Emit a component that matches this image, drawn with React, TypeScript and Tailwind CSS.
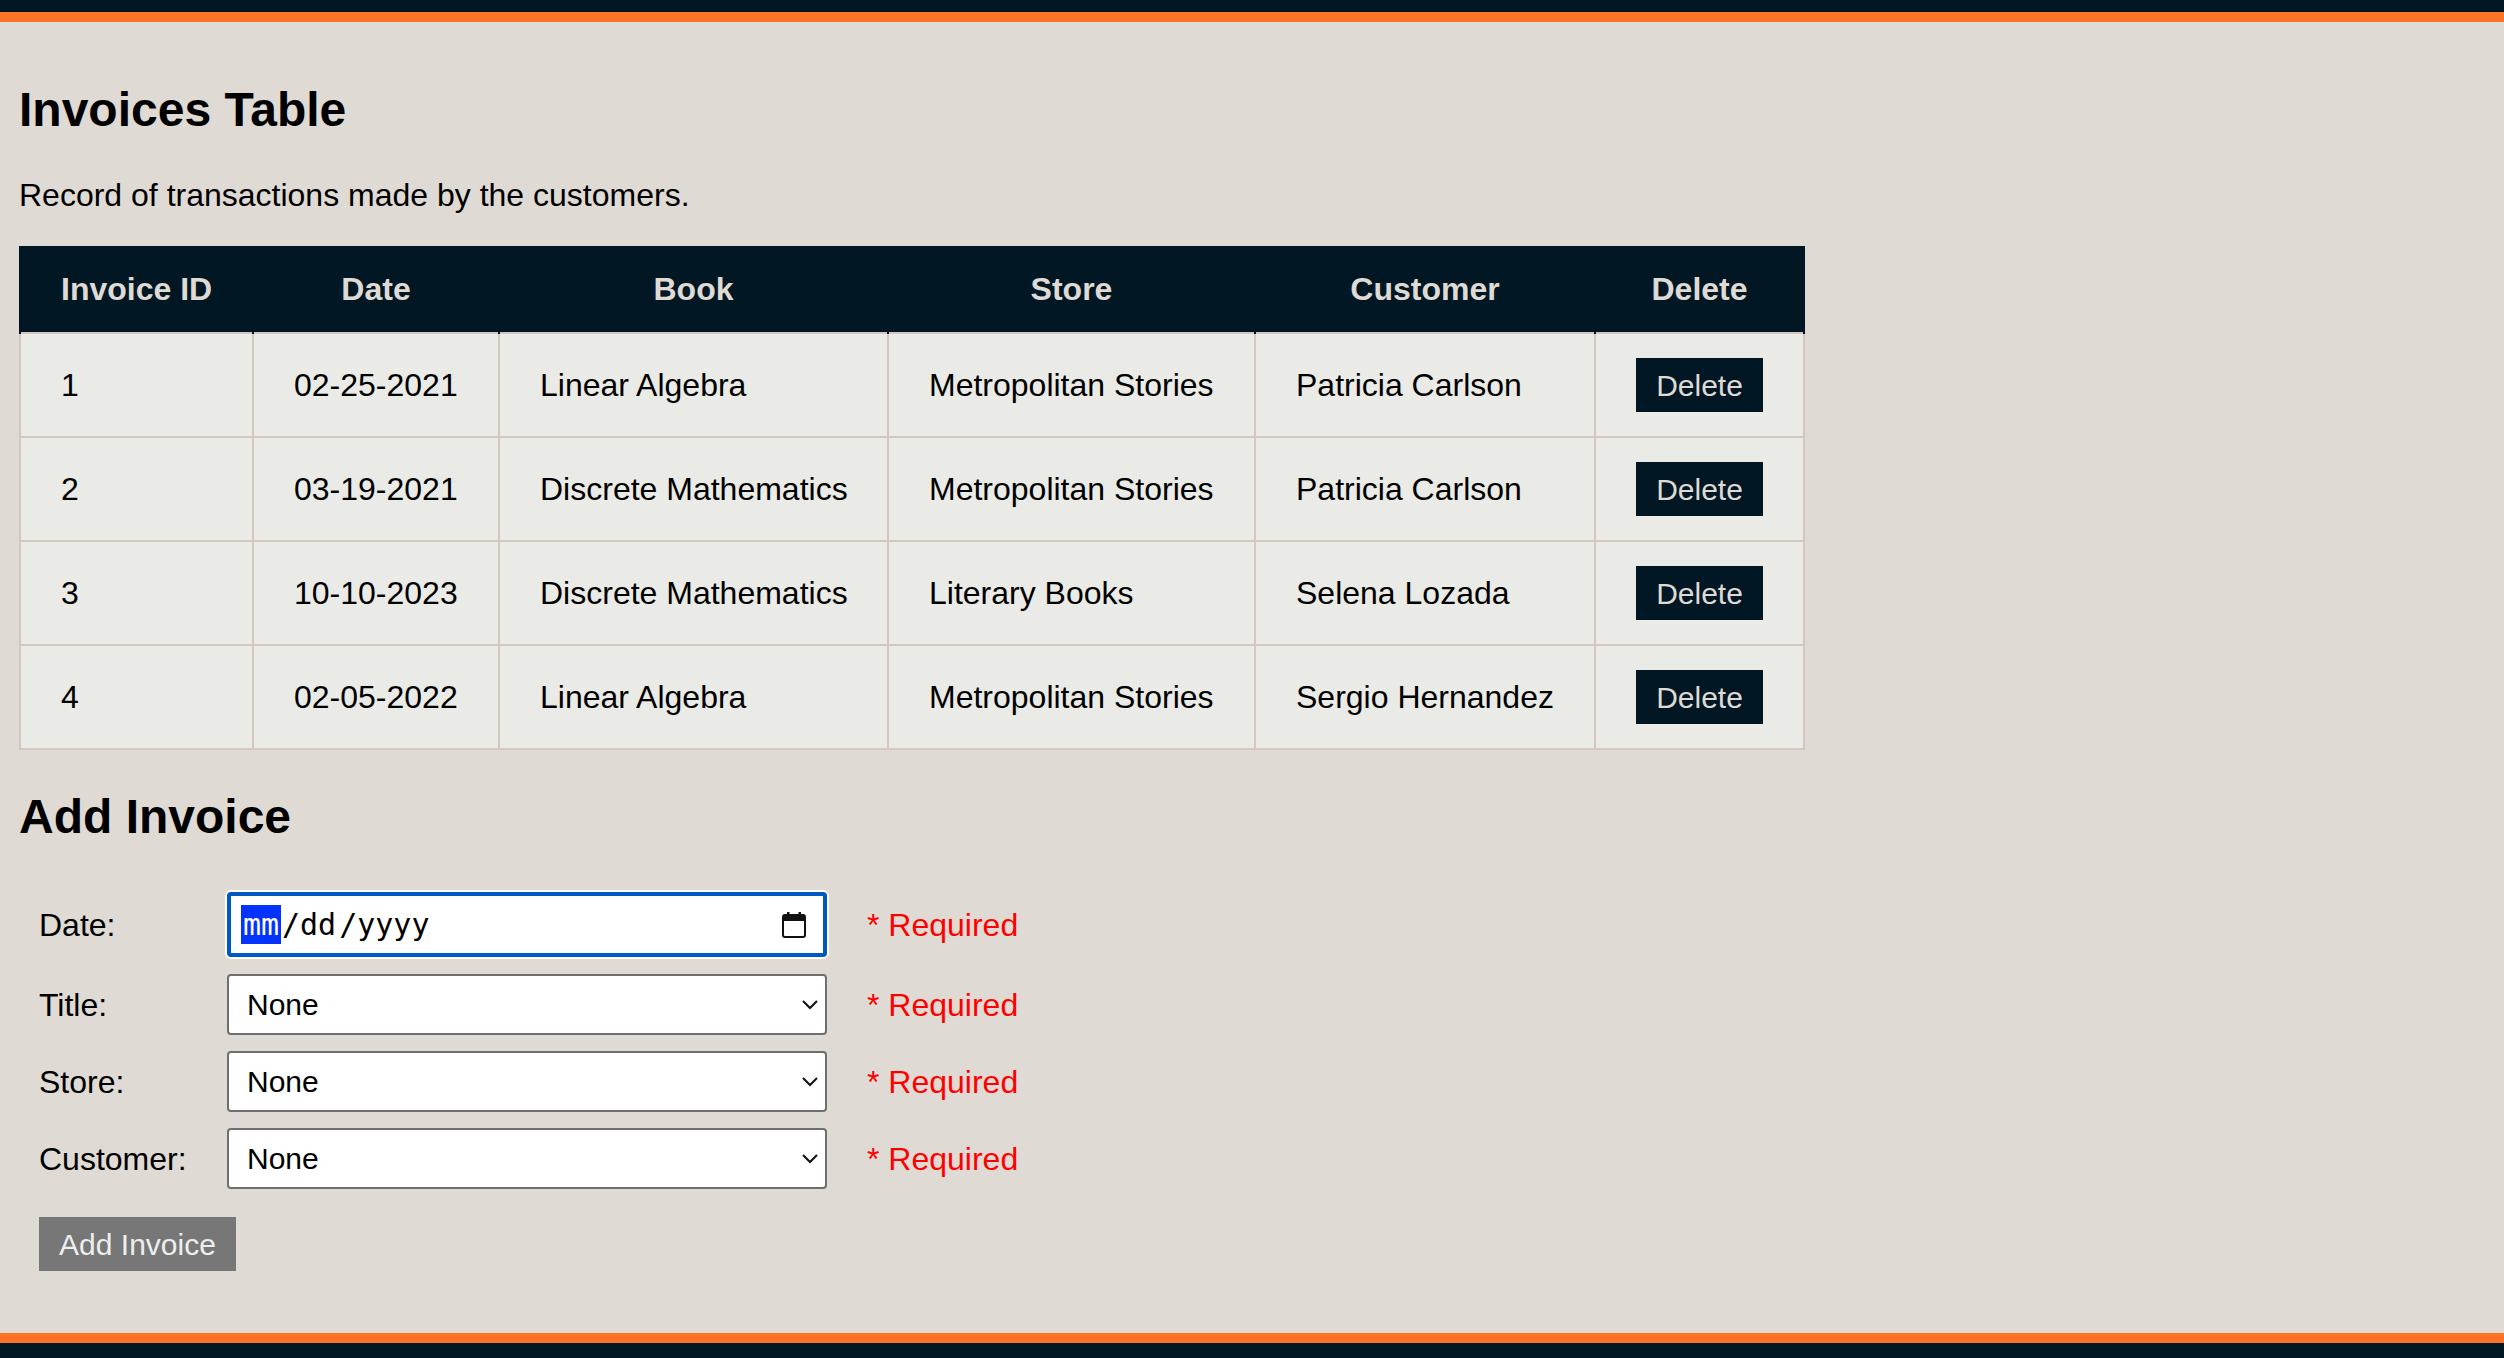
const invoices = [
  { id: 1, date: '02-25-2021', book: 'Linear Algebra', store: 'Metropolitan Stories', customer: 'Patricia Carlson' },
  { id: 2, date: '03-19-2021', book: 'Discrete Mathematics', store: 'Metropolitan Stories', customer: 'Patricia Carlson' },
  { id: 3, date: '10-10-2023', book: 'Discrete Mathematics', store: 'Literary Books', customer: 'Selena Lozada' },
  { id: 4, date: '02-05-2022', book: 'Linear Algebra', store: 'Metropolitan Stories', customer: 'Sergio Hernandez' },
]

function Required() {
  return <span className="ml-[40px] text-[32px] text-[#ff0000]">* Required</span>
}

function SelectRow({ label }: { label: string }) {
  return (
    <div className="flex items-center">
      <label className="w-[188px] text-[32px] text-black">{label}</label>
      <div className="relative w-[600px]">
        <select className="block h-[61px] w-full appearance-none rounded-[4px] border-2 border-[#6f6f6f] bg-white pl-[18px] text-[30px] text-black">
          <option>None</option>
        </select>
        <svg className="pointer-events-none absolute right-[9px] top-[26px] h-[10px] w-[16px]" viewBox="0 0 16 10" fill="none">
          <path d="M1 1l7 7 7-7" stroke="#111" strokeWidth="2" />
        </svg>
      </div>
      <Required />
    </div>
  )
}

export default function App() {
  const th = 'whitespace-nowrap bg-[#011724] border-x-2 border-[#011724] px-[40px] text-center text-[32px] font-bold text-[#dfdad4]'
  const td = 'whitespace-nowrap border-2 border-[#d3c7bf] px-[40px] text-[32px] text-black'

  return (
    <div className="flex min-h-screen flex-col bg-[#dfdad4] font-['Liberation_Sans',Arial,sans-serif]">
      <header className="h-[22px] border-b-[10px] border-[#ff7326] bg-[#011724]" />

      <main className="flex-1 px-[19px]">
        <h2 className="mt-[60px] text-[48px] font-bold leading-[55px] text-black">Invoices Table</h2>
        <p className="mt-[40px] text-[32px] leading-[37px] text-black">Record of transactions made by the customers.</p>

        <table className="mt-[32px] w-[1784px] table-fixed border-collapse">
          <colgroup>
            <col className="w-[233px]" />
            <col className="w-[246px]" />
            <col className="w-[389px]" />
            <col className="w-[367px]" />
            <col className="w-[340px]" />
            <col className="w-[209px]" />
          </colgroup>
          <thead>
            <tr className="h-[87px]">
              <th className={th}>Invoice ID</th>
              <th className={th}>Date</th>
              <th className={th}>Book</th>
              <th className={th}>Store</th>
              <th className={th}>Customer</th>
              <th className={th}>Delete</th>
            </tr>
          </thead>
          <tbody>
            {invoices.map((inv) => (
              <tr key={inv.id} className="h-[104px] bg-[#eaeae6]">
                <td className={td}>{inv.id}</td>
                <td className={td}>{inv.date}</td>
                <td className={td}>{inv.book}</td>
                <td className={td}>{inv.store}</td>
                <td className={td}>{inv.customer}</td>
                <td className={`${td} text-center`}>
                  <button className="h-[54px] w-[127px] bg-[#011724] text-[30px] text-[#dfdad4]">Delete</button>
                </td>
              </tr>
            ))}
          </tbody>
        </table>

        <h2 className="mt-[39px] text-[48px] font-bold leading-[55px] text-black">Add Invoice</h2>

        <form className="mt-[48px] flex flex-col gap-[16px] pl-[20px]">
          <div className="mb-[1px] flex items-center">
            <label className="w-[188px] text-[32px] text-black">Date:</label>
            <div className="flex h-[65px] w-[600px] items-center justify-between rounded-[4px] border-4 border-[#0059c1] bg-white pl-[10px] pr-[17px] shadow-[0_0_0_2px_#ffffff] font-['DejaVu_Sans_Mono',monospace] text-[30px] text-black">
              <span className="flex items-center">
                <span className="flex h-[39px] w-[40px] items-center justify-center bg-[#0433ff] text-white">mm</span>
                <span className="ml-[1px]">/dd</span>
                <span className="ml-[3px]">/yyyy</span>
              </span>
              <svg className="h-[26px] w-[24px]" viewBox="0 0 24 26" fill="none">
                <path d="M5 0h2.5v3H5zM16.5 0H19v3h-2.5z" fill="#111" />
                <rect x="1" y="3" width="22" height="22" rx="2" stroke="#111" strokeWidth="2" />
                <rect x="1" y="3" width="22" height="6" fill="#111" />
              </svg>
            </div>
            <Required />
          </div>

          <SelectRow label="Title:" />
          <SelectRow label="Store:" />
          <SelectRow label="Customer:" />

          <div className="mt-[12px]">
            <button type="button" className="h-[54px] w-[197px] bg-[#777777] text-[30px] text-[#eeeeee]">Add Invoice</button>
          </div>
        </form>
      </main>

      <footer className="h-[25px] border-t-[10px] border-[#ff7326] bg-[#011724]" />
    </div>
  )
}
